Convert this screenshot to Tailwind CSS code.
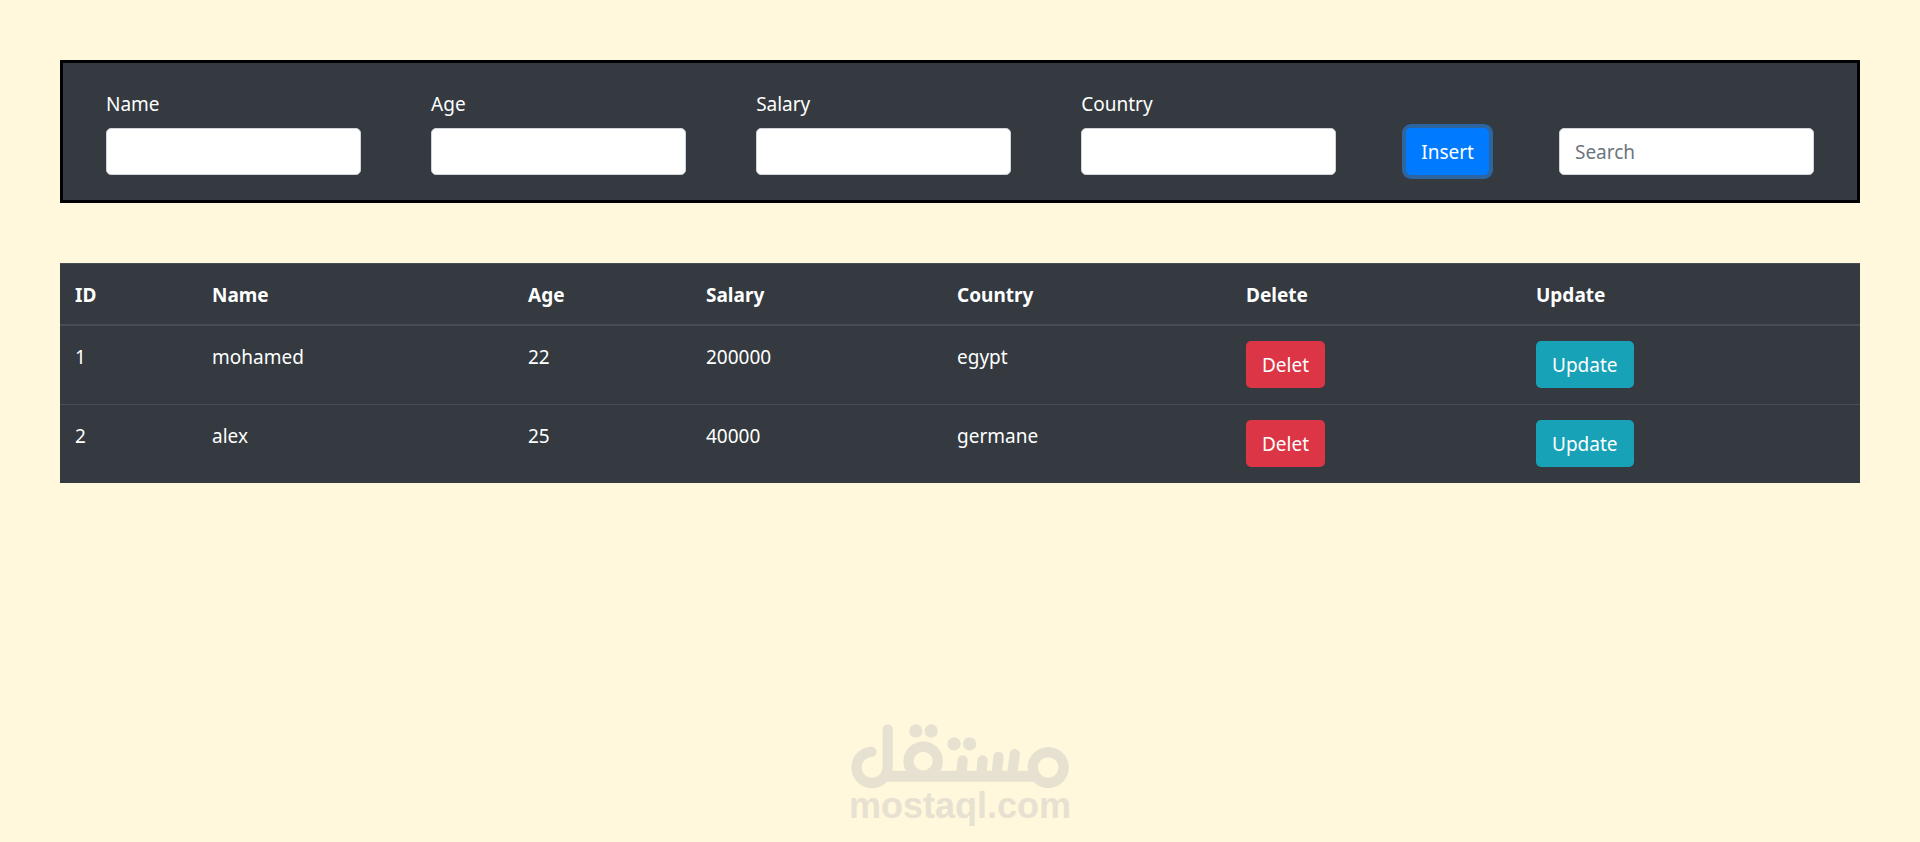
<!DOCTYPE html>
<html lang="en">
<head>
    <meta charset="UTF-8">
    <meta name="viewport" content="width=device-width, initial-scale=1.0">
    <title>Employees</title>
    <script src="https://cdn.jsdelivr.net/npm/@tailwindcss/browser@4"></script>
</head>
<body class="flex min-h-screen flex-col bg-[#fff8dc] font-['Noto_Sans',sans-serif] text-[19px] leading-[30px] text-white">

    <main class="p-[60px]">

        <!-- Insert form -->
        <form id="employee-form" class="mb-[60px] flex items-end gap-[70px] border-3 border-black bg-[#343a40] px-[43px] pt-[26px] pb-[25px]">
            <div class="min-w-0 flex-1">
                <label for="name" class="mb-[9px] block">Name</label>
                <input id="name" type="text" class="block h-[47px] w-full rounded-[5px] border border-[#ced4da] bg-white px-[15px] text-[#495057]">
            </div>
            <div class="min-w-0 flex-1">
                <label for="age" class="mb-[9px] block">Age</label>
                <input id="age" type="text" class="block h-[47px] w-full rounded-[5px] border border-[#ced4da] bg-white px-[15px] text-[#495057]">
            </div>
            <div class="min-w-0 flex-1">
                <label for="salary" class="mb-[9px] block">Salary</label>
                <input id="salary" type="text" class="block h-[47px] w-full rounded-[5px] border border-[#ced4da] bg-white px-[15px] text-[#495057]">
            </div>
            <div class="min-w-0 flex-1">
                <label for="country" class="mb-[9px] block">Country</label>
                <input id="country" type="text" class="block h-[47px] w-full rounded-[5px] border border-[#ced4da] bg-white px-[15px] text-[#495057]">
            </div>
            <button type="button" class="h-[47px] rounded-[5px] bg-[#007bff] px-[15px] ring-4 ring-[#268fff]/50">Insert</button>
            <div class="min-w-0 flex-1">
                <input id="search" type="search" placeholder="Search" aria-label="Search" class="block h-[47px] w-full rounded-[5px] border border-[#ced4da] bg-white px-[15px] text-[#495057] placeholder:text-[#6c757d]">
            </div>
        </form>

        <!-- Employees table -->
        <table class="w-full table-fixed border-separate border-spacing-0 bg-[#343a40] text-left">
            <thead>
                <tr>
                    <th class="w-[137px] border-t border-b-2 border-[#454d55] px-[15px] pt-4 pb-[14px]">ID</th>
                    <th class="w-[316px] border-t border-b-2 border-[#454d55] px-[15px] pt-4 pb-[14px]">Name</th>
                    <th class="w-[178px] border-t border-b-2 border-[#454d55] px-[15px] pt-4 pb-[14px]">Age</th>
                    <th class="w-[251px] border-t border-b-2 border-[#454d55] px-[15px] pt-4 pb-[14px]">Salary</th>
                    <th class="w-[289px] border-t border-b-2 border-[#454d55] px-[15px] pt-4 pb-[14px]">Country</th>
                    <th class="w-[290px] border-t border-b-2 border-[#454d55] px-[15px] pt-4 pb-[14px]">Delete</th>
                    <th class="w-[339px] border-t border-b-2 border-[#454d55] px-[15px] pt-4 pb-[14px]">Update</th>
                </tr>
            </thead>
            <tbody class="align-top">
                <tr>
                    <td class="px-[15px] py-4">1</td>
                    <td class="px-[15px] py-4">mohamed</td>
                    <td class="px-[15px] py-4">22</td>
                    <td class="px-[15px] py-4">200000</td>
                    <td class="px-[15px] py-4">egypt</td>
                    <td class="px-[15px] pt-[15px] pb-4"><button type="button" class="block h-[47px] rounded-[5px] bg-[#dc3545] px-4">Delet</button></td>
                    <td class="px-[15px] pt-[15px] pb-4"><button type="button" class="block h-[47px] rounded-[5px] bg-[#17a2b8] px-4">Update</button></td>
                </tr>
                <tr>
                    <td class="border-t border-[#454d55] px-[15px] py-4">2</td>
                    <td class="border-t border-[#454d55] px-[15px] py-4">alex</td>
                    <td class="border-t border-[#454d55] px-[15px] py-4">25</td>
                    <td class="border-t border-[#454d55] px-[15px] py-4">40000</td>
                    <td class="border-t border-[#454d55] px-[15px] py-4">germane</td>
                    <td class="border-t border-[#454d55] px-[15px] pt-[15px] pb-4"><button type="button" class="block h-[47px] rounded-[5px] bg-[#dc3545] px-4">Delet</button></td>
                    <td class="border-t border-[#454d55] px-[15px] pt-[15px] pb-4"><button type="button" class="block h-[47px] rounded-[5px] bg-[#17a2b8] px-4">Update</button></td>
                </tr>
            </tbody>
        </table>
    </main>

    <!-- Watermark -->
    <footer class="mt-auto flex flex-col items-center pb-[18px] text-[#e7e1d1]">
        <svg class="h-16 w-[219px] overflow-visible" viewBox="62 72 657 193" fill="none" stroke="currentColor" stroke-width="31" stroke-linecap="round" aria-hidden="true">
            <path d="M122 156A47 47 0 1 0 171 203V88"/>
            <path d="M162 229.500H618" stroke-width="33" stroke-linecap="butt"/>
            <circle cx="278" cy="184" r="44"/>
            <circle cx="655" cy="203" r="46.500"/>
            <path d="M397 182L393 228M457 182L453 228M505 171L499 228M554 163L546 228"/>
            <g fill="currentColor" stroke="none">
                <circle cx="256" cy="93" r="20"/>
                <circle cx="302" cy="93" r="20"/>
                <circle cx="371" cy="132" r="20"/>
                <circle cx="418" cy="132" r="20"/>
            </g>
        </svg>
        <p class="font-['Liberation_Sans',sans-serif] text-[36px] leading-9 font-bold">mostaql.com</p>
    </footer>

</body>
</html>
